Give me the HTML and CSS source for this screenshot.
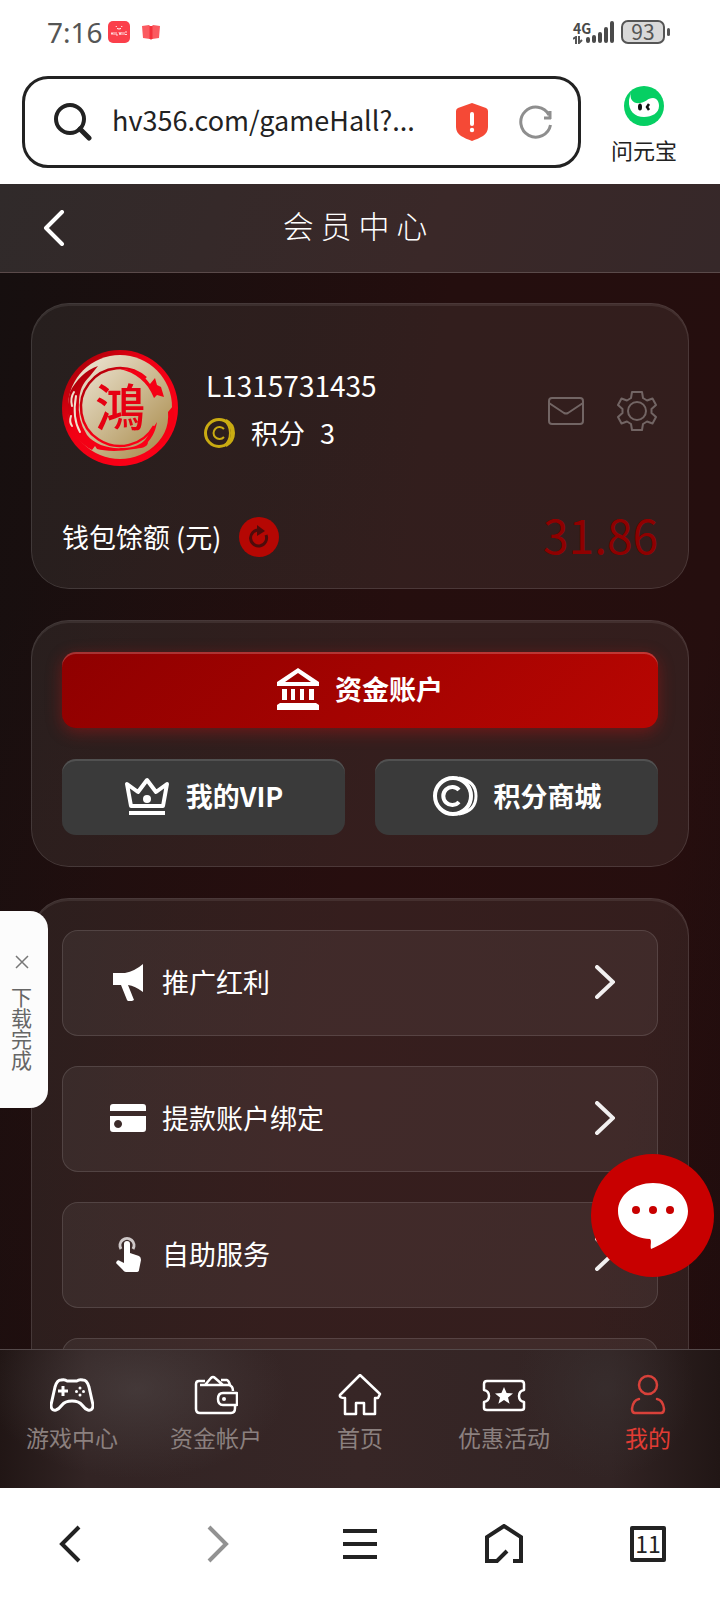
FILE: index.html
```html
<!DOCTYPE html>
<html lang="zh-CN">
<head>
<meta charset="UTF-8" />
<meta name="viewport" content="width=device-width, initial-scale=1" />
<title>会员中心</title>
<link rel="stylesheet" href="styles.css">
</head>
<body>

<div class="status">
    <span class="clock">7:16</span>
    <svg class="app-icon" width="22" height="22" viewBox="0 0 22 22">
        <rect width="22" height="22" rx="5" fill="#fb3f4b"/>
        <path d="M8 5l.5 1M14 5l-.5 1M9 7.500q2 1 4 0" stroke="#fff" fill="none"/>
        <path d="M3 12.500h2M4 11v3M6 11v3M8 11v3h2M11 11l1 3 1-3M14 11v3M16 11v3M17 11h2M17 13.500h2" stroke="#ffd9db" fill="none"/>
    </svg>
    <svg class="book-icon" width="18" height="16" viewBox="0 0 18 16">
        <path d="M0 2l7-1 2 2 2-2 7 1-1 12-7 1-1 1-1-1-7-1z" fill="#fb5a60"/>
        <path d="M7.500 2h3v13h-3z" fill="#f5303a"/>
    </svg>
    <div class="net">
        <span>4G</span>
        <svg width="10" height="8" viewBox="0 0 10 8">
            <path d="M0 3l3-2v7M6 0v7l3-3" stroke="#555" stroke-width="2" fill="none"/>
        </svg>
    </div>
    <svg class="signal" width="30" height="24" viewBox="0 0 30 24">
        <path d="M3 19v2M9 17v4M15 14v7M21 9v12M27 3v18" stroke="#4a4a4a" stroke-width="4" stroke-linecap="round"/>
    </svg>
    <span class="battery">93</span>
</div>

<div class="browser-top">
    <form class="address">
        <svg width="38" height="38" viewBox="0 0 38 38" fill="none" stroke="#222" stroke-width="4">
            <circle cx="16" cy="16" r="14"/>
            <path d="M26 26l9 9" stroke-width="5" stroke-linecap="round"/>
        </svg>
        <input type="text" class="url" value="hv356.com/gameHall?..." aria-label="网址">
        <svg width="32" height="38" viewBox="0 0 32 38">
            <path d="M16 0L30 5q2 1 2 3v16c0 8-8 11-16 14C8 35 0 32 0 24V8q0-2 2-3z" fill="#f54936"/>
            <path d="M16 11v10" stroke="#fff" stroke-width="4" stroke-linecap="round"/>
            <circle cx="16" cy="27" r="2.200" fill="#fff"/>
        </svg>
        <button type="button" class="plain" aria-label="刷新">
            <svg width="34" height="34" viewBox="0 0 34 34" fill="none" stroke="#8e8e8e" stroke-width="3">
                <path d="M31.500 20A15 15 0 1 1 30 10M32 13h-7M31 6v8"/>
            </svg>
        </button>
    </form>
    <button type="button" class="assistant">
        <svg width="40" height="40" viewBox="0 0 40 40">
            <circle cx="20" cy="20" r="20" fill="#06cf63"/>
            <path d="M7 6c-2 8 3 12 9 11 7-1 7-5 13-5 4 0 6 4 6 8 0 7-7 11-15 11C11 31 4 25 5 14z" fill="#fff"/>
            <ellipse cx="16" cy="21" rx="2" ry="3.500" fill="#111"/>
            <path d="M25 18l-2 3 2 3" stroke="#111" stroke-width="2.500" fill="none"/>
        </svg>
        问元宝
    </button>
</div>

<header class="page-head">
    <button type="button" class="back plain" aria-label="返回">
        <svg width="22" height="36" viewBox="0 0 22 36" fill="none" stroke="#fff" stroke-width="4" stroke-linecap="round" stroke-linejoin="round">
            <path d="M19 2L3 18l16 16"/>
        </svg>
    </button>
    <h1>会 员 中 心</h1>
</header>

<main class="content">
    <section class="card profile">
        <div class="user">
            <svg class="avatar" width="116" height="116" viewBox="0 0 116 116">
                <defs>
                    <linearGradient id="gold" x1="0" y1="0" x2="1" y2="1">
                        <stop offset="0" stop-color="#f3ecdf"/>
                        <stop offset=".5" stop-color="#cdbb93"/>
                        <stop offset="1" stop-color="#a58543"/>
                    </linearGradient>
                    <linearGradient id="ring" x1="0" y1="0" x2="1" y2="1">
                        <stop offset=".1" stop-color="#a90008"/>
                        <stop offset=".4" stop-color="#f00014"/>
                        <stop offset="1" stop-color="#ff0018"/>
                    </linearGradient>
                </defs>
                <circle cx="58" cy="58" r="58" fill="url(#ring)"/>
                <circle cx="58" cy="57" r="52" fill="url(#gold)"/>
                <path d="M84 28A39 39 0 1 0 92 76" fill="none" stroke="url(#ring)" stroke-width="2.500"/>
                <path d="M8 42C14 30 24 20 36 16L28 26C20 34 18 40 17 50q-2 20 8 35c8 10 22 14 36 13 12 0 18-4 22-8l12-18c-2 12-6 16-9 20 0 6-8 6-14 7-16 3-30 2-37 0l-2-3-3 4C8 88 2 66 8 42z" fill="url(#ring)"/>
                <path d="M12 42q-4 6-2 14M9 66q-2 6 1 10M14 46q-4 22 4 36" fill="none" stroke="#efe3cf" stroke-width="2" stroke-linecap="round"/>
                <path d="M58 19q20 0 30 15l5-6 2 7 4 2 3 10-7-2-3 3C85 31 74 23 58 19zM106 62q2 22-18 38 20-6 25-30l-2-14z" fill="#f50014"/>
                <text x="58" y="76" class="seal" text-anchor="middle">鴻</text>
            </svg>
            <div class="who">
                <p class="user-id">L1315731435</p>
                <p class="points">
                    <svg width="32" height="32" viewBox="0 0 32 32" fill="none" stroke="#c9ab12" stroke-width="3">
                        <circle cx="15" cy="16" r="13.500"/>
                        <path d="M20 12a6 6 0 1 0 0 8M22 3q8 4 8 13t-8 13M20 3q6 5 6 13t-6 13" stroke-width="2"/>
                    </svg>
                    <span>积分</span><span>3</span>
                </p>
            </div>
            <div class="tools">
                <button type="button" class="plain" aria-label="消息">
                    <svg width="36" height="28" viewBox="0 0 36 28" fill="none" stroke="#726564" stroke-width="2">
                        <rect x="1" y="1" width="34" height="26" rx="3"/>
                        <path d="M1 6l15 10q2 1 4 0L35 6"/>
                    </svg>
                </button>
                <button type="button" class="plain" aria-label="设置">
                    <svg width="40" height="40" viewBox="0 0 40 40" fill="none" stroke="#726564" stroke-width="2" stroke-linejoin="round">
                        <path d="M15 1H25L26 7L30 9.500L35.500 7.500L39 14L34.500 18V22L39 26L35.500 32.500L30 30.500L26 33L25 39H15L14 33L10 30.500L4.500 32.500L1 26L5.500 22V18L1 14L4.500 7.500L10 9.500L14 7Z"/>
                        <circle cx="20" cy="20" r="9"/>
                    </svg>
                </button>
            </div>
        </div>
        <div class="wallet">
            <span>钱包馀额 (元)</span>
            <button type="button" class="plain" aria-label="刷新余额">
                <svg width="40" height="40" viewBox="0 0 40 40">
                    <circle cx="20" cy="20" r="20" fill="#b50703"/>
                    <path d="M27 18a8 8 0 1 1-7-5" fill="none" stroke="#4d0c0b" stroke-width="3"/>
                    <path d="M18 8l8 6-8 5z" fill="#4d0c0b"/>
                </svg>
            </button>
            <strong class="balance">31.86</strong>
        </div>
    </section>

    <section class="card actions">
        <button type="button" class="btn btn-main">
            <svg width="42" height="42" viewBox="0 0 42 42" fill="#fff">
                <path d="M21 0L42 14v4H0v-4zM21 5L8 14h26z" fill-rule="evenodd"/>
                <path d="M5 21h5v11H5zM14 21h4v11h-4zM23 21h4v11h-4zM32 21h5v11h-5zM3 35h36l3 2v5H0v-5z"/>
            </svg>
            资金账户
        </button>
        <button type="button" class="btn">
            <svg width="46" height="40" viewBox="0 0 46 40" fill="none" stroke="#fff" stroke-width="4">
                <path d="M3 8l4 22h32l4-22-11 8L23 4l-9 12z" stroke-linejoin="round"/>
                <path d="M5 37h36"/>
                <circle cx="23" cy="23" r="4" fill="#fff" stroke="none"/>
            </svg>
            我的VIP
        </button>
        <button type="button" class="btn">
            <svg width="46" height="42" viewBox="0 0 46 42" fill="none" stroke="#fff" stroke-width="4">
                <circle cx="21" cy="21" r="18"/>
                <path d="M27 15a9 9 0 1 0 0 12"/>
                <path d="M27 3q17 3 17 18T27 39M32 6q7 6 7 15t-7 15" stroke-width="3"/>
            </svg>
            积分商城
        </button>
    </section>

    <section class="card menu">
        <a href="#" class="row">
            <svg width="38" height="38" viewBox="0 0 38 38" fill="#fff">
                <path d="M4 10h12q10-2 18-9v28q-8-6-15-7l6 15q-5 3-7 0l-6-15H4z"/>
            </svg>
            <span>推广红利</span>
            <svg class="arrow" width="20" height="34" viewBox="0 0 20 34"><path d="M2 2l16 15L2 32"/></svg>
        </a>
        <a href="#" class="row">
            <svg width="38" height="38" viewBox="0 0 38 38" fill="#fff">
                <path d="M4 5h30q3 0 3 3v4H1V8q0-3 3-3z"/>
                <path d="M1 17h36v13q0 3-3 3H4q-3 0-3-3zM9 21a4 4 0 1 0 .1 0z" fill-rule="evenodd"/>
            </svg>
            <span>提款账户绑定</span>
            <svg class="arrow" width="20" height="34" viewBox="0 0 20 34"><path d="M2 2l16 15L2 32"/></svg>
        </a>
        <a href="#" class="row">
            <svg width="38" height="38" viewBox="0 0 38 38" fill="#fff">
                <path d="M12 14a7 7 0 1 1 12 0" fill="none" stroke="#cfc8c8" stroke-width="3"/>
                <path d="M15 9q0-3 3-3t3 3v9l9 3q2 1 2 4l-2 10q0 2-3 2H17q-2 0-4-3l-6-6q1-4 4-2l4 2z"/>
            </svg>
            <span>自助服务</span>
            <svg class="arrow" width="20" height="34" viewBox="0 0 20 34"><path d="M2 2l16 15L2 32"/></svg>
        </a>
        <div class="row"></div>
    </section>
</main>

<nav class="tabs">
    <a href="#">
        <svg width="44" height="42" viewBox="0 0 44 42" fill="none" stroke="#fff" stroke-width="3" stroke-linejoin="round">
            <path d="M11 6q4-1 6 1h10q2-2 6-1 4 0 6 7l4 18q0 6-5 5-3-1-6-5-3-4-10-4t-10 4q-3 4-6 5-5 1-5-5l4-18q2-7 6-7z"/>
            <path d="M13 12v10M8 17h10"/>
            <g fill="#fff" stroke="none"><circle cx="30" cy="14" r="1.500"/><circle cx="30" cy="21" r="1.500"/><circle cx="26.500" cy="17.500" r="1.500"/><circle cx="33.500" cy="17.500" r="1.500"/></g>
        </svg>
        游戏中心
    </a>
    <a href="#">
        <svg width="44" height="42" viewBox="0 0 44 42" fill="none" stroke="#fff" stroke-width="2.500" stroke-linejoin="round">
            <path d="M11 7H5Q2 7 2 10v25q0 4 4 4h31q4 0 4-5v-2M6 11h29q4 1 4 6M11 11l6-7q2-2 4 0l8 7M27 6h6q2 1 3 5"/>
            <path d="M43 19H29q-5 0-5 6t5 6h14z"/>
            <circle cx="30" cy="25" r="2" fill="#fff" stroke="none"/>
        </svg>
        资金帐户
    </a>
    <a href="#">
        <svg width="44" height="42" viewBox="0 0 44 42" fill="none" stroke="#fff" stroke-width="2.500" stroke-linejoin="round">
            <path d="M22 1L2 21q-1 3 5 3v16h11V29h8v11h11V24h3l2-4z"/>
        </svg>
        首页
    </a>
    <a href="#">
        <svg width="44" height="42" viewBox="0 0 44 42" fill="none" stroke="#fff" stroke-width="2.500" stroke-linejoin="round">
            <path d="M5 7h34q3 0 3 3v6q-5 1-5 6t5 6v6q0 2-3 2H5q-3 0-3-2v-6q5-1 5-6t-5-6v-6q0-3 3-3z"/>
            <path d="M22 13l2.600 6 6.400.5-5 4 1.600 6.300L22 26l-5.600 3.800L18 23.500l-5-4 6.400-.5z" fill="#fff" stroke="none"/>
        </svg>
        优惠活动
    </a>
    <a href="#" class="active">
        <svg width="44" height="42" viewBox="0 0 44 42" fill="none" stroke="#d8413a" stroke-width="2.500" stroke-linecap="round">
            <circle cx="22" cy="11" r="9"/>
            <path d="M13 25q-6 1-7 10 0 4 3 4h26q3 0 3-4-1-9-7-10"/>
        </svg>
        我的
    </a>
</nav>

<div class="browser-bottom">
    <button type="button" class="plain" aria-label="后退">
        <svg width="40" height="40" viewBox="0 0 40 40" fill="none" stroke="#222" stroke-width="4"><path d="M27 3L10 20l17 17"/></svg>
    </button>
    <button type="button" class="plain" aria-label="前进">
        <svg width="40" height="40" viewBox="0 0 40 40" fill="none" stroke="#929292" stroke-width="4"><path d="M13 3l17 17-17 17"/></svg>
    </button>
    <button type="button" class="plain" aria-label="菜单">
        <svg width="40" height="40" viewBox="0 0 40 40" fill="none" stroke="#222" stroke-width="4"><path d="M3 7h34M3 20h34M3 33h34"/></svg>
    </button>
    <button type="button" class="plain" aria-label="主页">
        <svg width="40" height="40" viewBox="0 0 40 40" fill="none" stroke="#222" stroke-width="4"><path d="M29 37h8V13L20 2 3 13v24h10l10-10"/></svg>
    </button>
    <button type="button" class="plain"><span class="count">11</span></button>
</div>

<aside class="download">
    <button type="button" class="plain" aria-label="关闭">
        <svg width="14" height="14" viewBox="0 0 14 14" stroke="#777" stroke-width="1.500"><path d="M1 1l12 12M13 1L1 13"/></svg>
    </button>
    <span>下载完成</span>
</aside>

<button type="button" class="chat" aria-label="在线客服">
    <svg width="70" height="66" viewBox="0 0 70 66">
        <path d="M35 0c19 0 35 12 35 28 0 17-18 30-37 38-1-4 1-8-1-10C14 55 0 44 0 28 0 12 16 0 35 0z" fill="#fff"/>
        <g fill="#c80000"><circle cx="18" cy="27" r="4"/><circle cx="35" cy="27" r="4"/><circle cx="52" cy="27" r="4"/></g>
    </svg>
</button>

</body>
</html>
```
FILE: styles.css
```css
* {
    box-sizing: border-box;
}
body {
    margin: 0;
    height: 100vh;
    display: flex;
    flex-direction: column;
    overflow: hidden;
    background: #fff;
    color: #fff;
    font-family: "Noto Sans CJK SC", "Noto Sans", sans-serif;
    font-size: 27px;
    line-height: 36px;
}
h1, p {
    margin: 0;
}
svg {
    display: block;
    flex: none;
}
button {
    font: inherit;
    color: inherit;
    border: 0;
    padding: 0;
    cursor: pointer;
}
a {
    color: inherit;
    text-decoration: none;
}
.plain {
    background: none;
}

/* barra de estado */
.status {
    flex: none;
    height: 64px;
    padding: 0 50px 0 47px;
    display: flex;
    align-items: center;
    color: #555;
}
.clock {
    font-family: "Noto Sans", sans-serif;
    font-size: 28px;
    width: 61px;
}
.book-icon {
    margin-left: 12px;
}
.net {
    margin-left: auto;
    width: 12px;
    font-size: 14px;
    font-weight: bold;
    line-height: 16px;
    color: #4a4a4a;
}
.battery {
    position: relative;
    margin: 0 5px 0 6px;
    width: 44px;
    height: 24px;
    border: 2px solid #555;
    border-radius: 7px;
    background: #d9d9d9;
    font-size: 21px;
    line-height: 18px;
    text-align: center;
}
.battery::after {
    content: "";
    position: absolute;
    right: -7px;
    top: 6px;
    width: 3px;
    height: 8px;
    border-radius: 2px;
    background: #555;
}

/* barra de direcciones */
.browser-top {
    flex: none;
    height: 120px;
    padding: 12px 13px 16px 22px;
    display: flex;
    align-items: flex-start;
    color: #222;
}
.address {
    flex: 1;
    min-width: 0;
    height: 92px;
    padding: 0 25px 0 29px;
    display: flex;
    align-items: center;
    border: 3px solid #222;
    border-radius: 26px;
}
.url {
    flex: 1;
    min-width: 0;
    margin: 0 30px 0 20px;
    padding: 0 0 5px;
    border: 0;
    outline: 0;
    background: none;
    color: #222;
    font-family: "Noto Sans CJK SC", sans-serif;
    font-size: 27px;
}
.address .plain {
    margin-left: 31px;
}
.assistant {
    width: 126px;
    padding-top: 10px;
    display: flex;
    flex-direction: column;
    align-items: center;
    gap: 5px;
    background: none;
    font-size: 22px;
}

/* cabecera */
.page-head {
    flex: none;
    height: 89px;
    padding: 0 43px;
    display: grid;
    grid-template-columns: 22px 1fr 32px;
    align-items: center;
    background: linear-gradient(110deg, #302a2a, #3a2828 60%, #362829);
    border-bottom: 1px solid #5a4a4a;
}
.page-head h1 {
    padding-bottom: 6px;
    font-size: 31px;
    font-weight: 300;
    text-align: center;
}

.content {
    flex: 1;
    min-height: 0;
    overflow-y: auto;
    scrollbar-width: none;
    padding: 30px 31px;
    display: flex;
    flex-direction: column;
    gap: 31px;
    background:
        radial-gradient(ellipse 70% 60% at 50% 75%, rgba(42, 14, 15, 0.7), transparent),
        linear-gradient(100deg, #160f0f, #240e0e 50%, #250e0e 85%, #1e0d0d);
}
.card {
    flex: none;
    padding: 31px 30px;
    border: 1px solid rgba(255, 255, 255, 0.12);
    border-radius: 38px;
    background: rgba(255, 250, 245, 0.065);
    box-shadow: inset 0 2px 0 rgba(255, 255, 255, 0.08);
}

.profile {
    padding: 46px 30px 31px;
}
.user {
    display: flex;
    align-items: center;
}
.who {
    margin-left: 26px;
    padding-top: 2px;
    display: grid;
    gap: 12px;
}
.user-id {
    padding-left: 2px;
    font-size: 28px;
}
.points {
    display: flex;
    align-items: center;
    gap: 15px;
}
.tools {
    margin-left: auto;
    padding: 6px 1px 0 0;
    display: flex;
    align-items: center;
    gap: 33px;
}
.wallet {
    margin-top: 51px;
    height: 40px;
    display: flex;
    align-items: center;
    gap: 18px;
}
.balance {
    margin-left: auto;
    padding-bottom: 6px;
    color: #8f0000;
    font-size: 46px;
    font-weight: 400;
}
.seal {
    font-size: 50px;
    font-weight: 500;
    fill: #e60012;
}

.actions {
    display: grid;
    grid-template-columns: 1fr 1fr;
    gap: 31px 30px;
}
.btn {
    height: 76px;
    padding-bottom: 2px;
    display: flex;
    align-items: center;
    justify-content: center;
    gap: 16px;
    border-radius: 14px;
    background: #3a3a3a;
    box-shadow: inset 0 2px 0 rgba(255, 255, 255, 0.12);
    font-weight: bold;
}
.btn-main {
    grid-column: 1 / -1;
    background: linear-gradient(135deg, #8f0000, #b80602);
    box-shadow: inset 0 2px 0 rgba(255, 255, 255, 0.2), 0 4px 16px rgba(200, 20, 20, 0.4);
}

.menu {
    display: grid;
    gap: 30px;
}
.row {
    height: 106px;
    padding: 0 42px 2px 46px;
    display: flex;
    align-items: center;
    gap: 15px;
    border: 1px solid rgba(255, 255, 255, 0.12);
    border-radius: 16px;
    background: rgba(255, 255, 255, 0.055);
}
.arrow {
    margin-left: auto;
    fill: none;
    stroke: #f2f0f0;
    stroke-width: 4px;
    stroke-linecap: round;
}

/* menú inferior */
.tabs {
    flex: none;
    height: 139px;
    padding-top: 24px;
    display: grid;
    grid-template-columns: repeat(5, 1fr);
    border-top: 1px solid #54494a;
    background:
        radial-gradient(ellipse 150px 90px at 19% 28%, rgba(84, 76, 76, 0.5), transparent),
        radial-gradient(circle at 84% 28%, rgba(58, 50, 50, 0.6), transparent 90px),
        linear-gradient(90deg, #211615, #322424 12%, #372626 50%, #322424 85%, #211615);
    color: #8b807f;
    font-size: 23px;
}
.tabs a {
    display: flex;
    flex-direction: column;
    align-items: center;
    gap: 3px;
}
.tabs .active {
    color: #e23c34;
}

.browser-bottom {
    flex: none;
    height: 112px;
    display: grid;
    grid-template-columns: repeat(5, 1fr);
    align-items: center;
    justify-items: center;
    color: #222;
}
.count {
    display: block;
    width: 36px;
    height: 36px;
    border: 4px solid #222;
    border-radius: 2px;
    font-size: 23px;
    line-height: 26px;
    text-align: center;
}

/* flotantes */
.download {
    position: fixed;
    left: 0;
    top: 911px;
    width: 48px;
    height: 197px;
    padding: 44px 5px 0 0;
    display: flex;
    flex-direction: column;
    align-items: center;
    gap: 17px;
    border-radius: 0 18px 18px 0;
    background: #fcfcfc;
    color: #666;
    font-size: 21px;
    line-height: 21px;
}
.download span {
    width: 21px;
}
.chat {
    position: fixed;
    right: 6px;
    bottom: 323px;
    width: 123px;
    height: 123px;
    display: grid;
    place-items: center;
    border-radius: 50%;
    background: #c80000;
}
```
